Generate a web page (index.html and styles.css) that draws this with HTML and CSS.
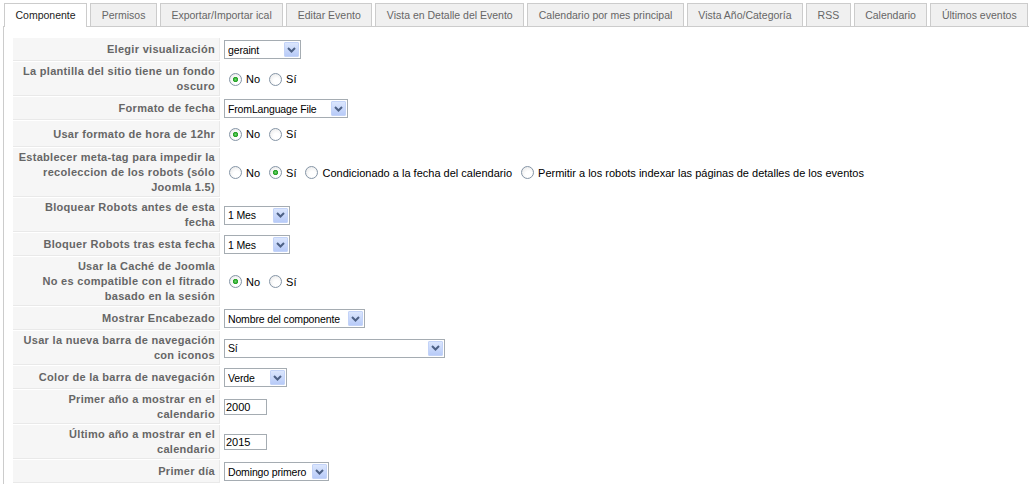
FILE: index.html
```html
<!DOCTYPE html>
<html lang="es">
<head>
<meta charset="utf-8">
<title>Configuración</title>
<link rel="stylesheet" href="styles.css">
</head>
<body>
<div class="tabs">
  <div class="tab active">Componente</div>
  <div class="tab">Permisos</div>
  <div class="tab">Exportar/Importar ical</div>
  <div class="tab">Editar Evento</div>
  <div class="tab">Vista en Detalle del Evento</div>
  <div class="tab">Calendario por mes principal</div>
  <div class="tab">Vista Año/Categoría</div>
  <div class="tab">RSS</div>
  <div class="tab">Calendario</div>
  <div class="tab">Últimos eventos</div>
</div>
<div class="panel">
  <table class="admintable">
    <tr>
      <td class="key">Elegir visualización</td>
      <td class="val"><span class="sel w77"><select><option>geraint</option></select><span class="arrow"><svg width="9" height="6" viewBox="0 0 9 6"><path d="M1 1 L4.5 4.5 L8 1" fill="none" stroke="#4d6185" stroke-width="2"/></svg></span></span></td>
    </tr>
    <tr>
      <td class="key">La plantilla del sitio tiene un fondo<br>oscuro</td>
      <td class="val"><div class="opts"><input type="radio" name="r1" checked><label>No</label><input type="radio" name="r1"><label>Sí</label></div></td>
    </tr>
    <tr>
      <td class="key">Formato de fecha</td>
      <td class="val"><span class="sel w124"><select><option>FromLanguage File</option></select><span class="arrow"><svg width="9" height="6" viewBox="0 0 9 6"><path d="M1 1 L4.5 4.5 L8 1" fill="none" stroke="#4d6185" stroke-width="2"/></svg></span></span></td>
    </tr>
    <tr>
      <td class="key">Usar formato de hora de 12hr</td>
      <td class="val"><div class="opts"><input type="radio" name="r2" checked><label>No</label><input type="radio" name="r2"><label>Sí</label></div></td>
    </tr>
    <tr>
      <td class="key">Establecer meta-tag para impedir la<br>recoleccion de los robots (sólo<br>Joomla 1.5)</td>
      <td class="val"><div class="opts"><input type="radio" name="r3"><label>No</label><input type="radio" name="r3" checked><label>Sí</label><input type="radio" name="r3"><label>Condicionado a la fecha del calendario</label><input type="radio" name="r3"><label>Permitir a los robots indexar las páginas de detalles de los eventos</label></div></td>
    </tr>
    <tr>
      <td class="key">Bloquear Robots antes de esta<br>fecha</td>
      <td class="val"><span class="sel w66"><select><option>1 Mes</option></select><span class="arrow"><svg width="9" height="6" viewBox="0 0 9 6"><path d="M1 1 L4.5 4.5 L8 1" fill="none" stroke="#4d6185" stroke-width="2"/></svg></span></span></td>
    </tr>
    <tr>
      <td class="key">Bloquer Robots tras esta fecha</td>
      <td class="val"><span class="sel w66"><select><option>1 Mes</option></select><span class="arrow"><svg width="9" height="6" viewBox="0 0 9 6"><path d="M1 1 L4.5 4.5 L8 1" fill="none" stroke="#4d6185" stroke-width="2"/></svg></span></span></td>
    </tr>
    <tr>
      <td class="key">Usar la Caché de Joomla<br>No es compatible con el fitrado<br>basado en la sesión</td>
      <td class="val"><div class="opts"><input type="radio" name="r4" checked><label>No</label><input type="radio" name="r4"><label>Sí</label></div></td>
    </tr>
    <tr>
      <td class="key">Mostrar Encabezado</td>
      <td class="val"><span class="sel w141"><select><option>Nombre del componente</option></select><span class="arrow"><svg width="9" height="6" viewBox="0 0 9 6"><path d="M1 1 L4.5 4.5 L8 1" fill="none" stroke="#4d6185" stroke-width="2"/></svg></span></span></td>
    </tr>
    <tr>
      <td class="key">Usar la nueva barra de navegación<br>con iconos</td>
      <td class="val"><span class="sel w221"><select><option>Sí</option></select><span class="arrow"><svg width="9" height="6" viewBox="0 0 9 6"><path d="M1 1 L4.5 4.5 L8 1" fill="none" stroke="#4d6185" stroke-width="2"/></svg></span></span></td>
    </tr>
    <tr>
      <td class="key">Color de la barra de navegación</td>
      <td class="val"><span class="sel w63"><select><option>Verde</option></select><span class="arrow"><svg width="9" height="6" viewBox="0 0 9 6"><path d="M1 1 L4.5 4.5 L8 1" fill="none" stroke="#4d6185" stroke-width="2"/></svg></span></span></td>
    </tr>
    <tr>
      <td class="key">Primer año a mostrar en el<br>calendario</td>
      <td class="val"><input class="txt" type="text" value="2000"></td>
    </tr>
    <tr>
      <td class="key">Último año a mostrar en el<br>calendario</td>
      <td class="val"><input class="txt" type="text" value="2015"></td>
    </tr>
    <tr>
      <td class="key">Primer día</td>
      <td class="val"><span class="sel w105"><select><option>Domingo primero</option></select><span class="arrow"><svg width="9" height="6" viewBox="0 0 9 6"><path d="M1 1 L4.5 4.5 L8 1" fill="none" stroke="#4d6185" stroke-width="2"/></svg></span></span></td>
    </tr>
  </table>
</div>
</body>
</html>
```
FILE: styles.css
```css
html, body {
  margin: 0;
  padding: 0;
  background: #fff;
  font-family: "Liberation Sans", Arial, sans-serif;
  font-size: 11px;
  color: #000;
}

.tabs {
  display: flex;
  gap: 3px;
  padding: 3px 0 0 4px;
}

.tab {
  height: 22px;
  line-height: 22px;
  padding: 0 10.5px;
  border: 1px solid #cccccc;
  border-bottom: none;
  background: #f0f0f0;
  color: #666;
  font-size: 10.5px;
  white-space: nowrap;
}

.tab.active {
  position: relative;
  z-index: 1;
  height: 23px;
  margin-bottom: -1px;
  background: #fff;
  color: #222;
}

.panel {
  margin-left: 3px;
  border-top: 1px solid #cccccc;
  border-left: 1px solid #cccccc;
  padding: 10px 0 0 8px;
}

.admintable {
  border-collapse: separate;
  border-spacing: 1px;
}

.admintable td {
  padding: 2px 3px;
  vertical-align: middle;
}

.admintable td.key {
  width: 200px;
  padding: 2px 4px 1px 2px;
  background: #f6f6f6;
  color: #666;
  font-weight: bold;
  text-align: right;
  line-height: 15px;
  letter-spacing: 0.3px;
  white-space: nowrap;
  border-bottom: 1px solid #e9e9e9;
  border-right: 1px solid #e9e9e9;
}

.admintable td.val {
  white-space: nowrap;
  line-height: 15px;
}

.opts {
  display: flex;
  align-items: center;
  min-height: 22px;
}

.opts label {
  padding-top: 1px;
  margin-right: 6px;
}

input[type="radio"] {
  appearance: none;
  -webkit-appearance: none;
  flex: none;
  width: 13px;
  height: 13px;
  margin: 0 4px 0 3px;
  border: 1px solid #8595a6;
  border-radius: 50%;
  background: radial-gradient(circle at 60% 65%, #ffffff 30%, #e4e4e4 100%);
  box-sizing: border-box;
}

input[type="radio"]:first-child {
  margin-left: 5px;
}

input[type="radio"]:checked {
  background:
    radial-gradient(circle at 50% 50%, #6fd66f 0, #22a122 2.2px, rgba(0,0,0,0) 3px),
    radial-gradient(circle at 60% 65%, #ffffff 30%, #e4e4e4 100%);
}

.sel {
  position: relative;
  display: block;
  height: 19px;
}

.sel select {
  appearance: none;
  -webkit-appearance: none;
  display: block;
  width: 100%;
  height: 19px;
  margin: 0;
  padding: 0 0 0 3px;
  border: 1px solid #a5acb2;
  border-radius: 0;
  background: #fff;
  font-family: "Liberation Sans", Arial, sans-serif;
  font-size: 10.5px;
  letter-spacing: -0.15px;
  color: #000;
  box-sizing: border-box;
}

.sel .arrow {
  position: absolute;
  top: 2px;
  right: 2px;
  width: 15px;
  height: 15px;
  box-sizing: border-box;
  border: 1px solid #c3d3f8;
  border-radius: 1px;
  background: linear-gradient(#dbe6fd, #b8cbf8);
  display: flex;
  align-items: center;
  justify-content: center;
  pointer-events: none;
}

.w63 { width: 63px; }
.w66 { width: 66px; }
.w77 { width: 77px; }
.w105 { width: 105px; }
.w124 { width: 124px; }
.w141 { width: 141px; }
.w221 { width: 221px; }

.txt {
  display: block;
  width: 43px;
  height: 16px;
  margin: 0;
  padding: 0 1px;
  border: 1px solid #a5acb2;
  font-family: "Liberation Sans", Arial, sans-serif;
  font-size: 11px;
  color: #000;
  box-sizing: border-box;
}
```
